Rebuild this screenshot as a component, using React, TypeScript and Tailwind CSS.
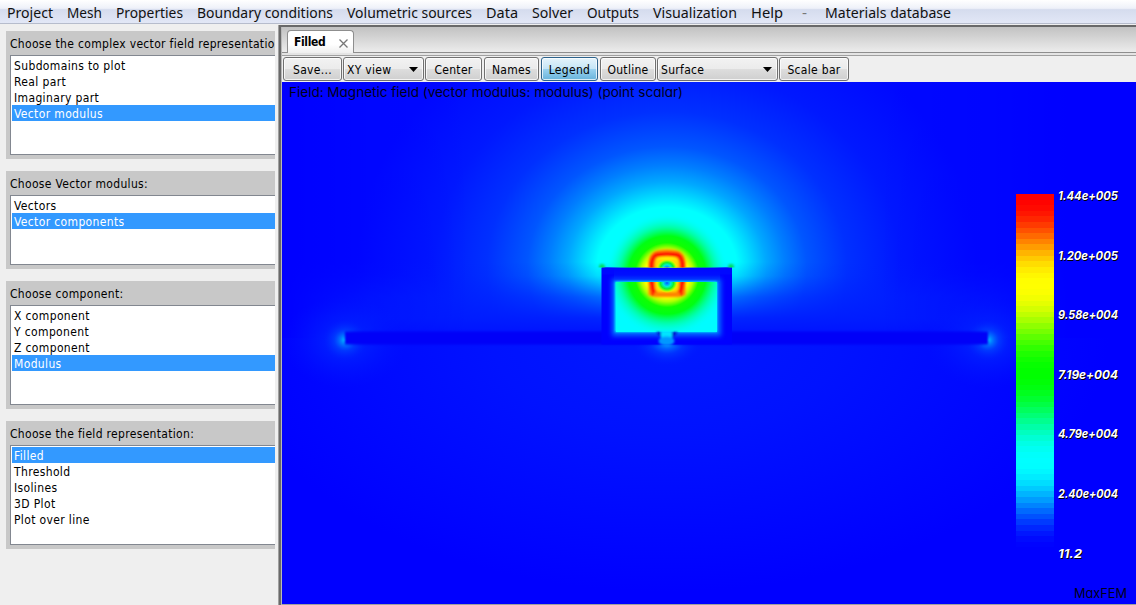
import React from "react";

const MENU = [
  { label: "Project", box: "w-[60px]", len: 46 },
  { label: "Mesh", box: "w-[49px]", len: 35 },
  { label: "Properties", box: "w-[81px]", len: 67 },
  { label: "Boundary conditions", box: "w-[150px]", len: 136 },
  { label: "Volumetric sources", box: "w-[139px]", len: 125 },
  { label: "Data", box: "w-[46px]", len: 32 },
  { label: "Solver", box: "w-[55px]", len: 41 },
  { label: "Outputs", box: "w-[66px]", len: 52 },
  { label: "Visualization", box: "w-[98px]", len: 84 },
  { label: "Help", box: "w-[51px]", len: 32 },
  { label: "-", box: "w-[23px]", len: 5 },
  { label: "Materials database", box: "w-[140px]", len: 126 },
];

const GROUPS = [
  {
    title: "Choose the complex vector field representation:",
    size: "h-[100px]",
    items: ["Subdomains to plot", "Real part", "Imaginary part", "Vector modulus"],
    selected: 3,
  },
  { title: "Choose Vector modulus:", size: "h-[70px]", items: ["Vectors", "Vector components"], selected: 1 },
  {
    title: "Choose component:",
    size: "h-[100px]",
    items: ["X component", "Y component", "Z component", "Modulus"],
    selected: 3,
  },
  {
    title: "Choose the field representation:",
    size: "h-[100px]",
    items: ["Filled", "Threshold", "Isolines", "3D Plot", "Plot over line"],
    selected: 0,
  },
];

const TOOLS = [
  { label: "Save...", box: "w-[59px] mr-px" },
  { label: "XY view", box: "w-[81px] mr-px", combo: true },
  { label: "Center", box: "w-[57px] mr-[2px]" },
  { label: "Names", box: "w-[55px] mr-[2px]" },
  { label: "Legend", box: "w-[57px] mr-[2px]", active: true },
  { label: "Outline", box: "w-[56px] mr-px" },
  { label: "Surface", box: "w-[121px] mr-px", combo: true },
  { label: "Scale bar", box: "w-[70px]" },
];

const TAHOMA = "font-['DejaVu_Sans_Condensed','DejaVu_Sans',sans-serif] [font-stretch:condensed]";
const LEGEND_LABELS = ["1.44e+005", "1.20e+005", "9.58e+004", "7.19e+004", "4.79e+004", "2.40e+004", "11.2"];
const BANDS = 64;

function rampColor(t: number) {
  const seg = Math.min(3, Math.floor(t * 4));
  const f = 0.5 * (1 - Math.cos(Math.PI * (t * 4 - seg)));
  const up = Math.round(255 * f);
  const down = 255 - up;
  return [`rgb(0,${up},255)`, `rgb(0,255,${down})`, `rgb(${up},255,0)`, `rgb(255,${down},0)`][seg];
}

function MenuBar() {
  return (
    <nav className="flex h-6 shrink-0 items-start border-b border-[#b6bccc] bg-[linear-gradient(#ffffff_0%,#eef1f9_36%,#d5dcee_42%,#e2e7f6_100%)] pl-[7px] font-['Noto_Sans',sans-serif] text-[14px] leading-[25px] text-black">
      {MENU.map((m) => (
        <div key={m.label} className={`${m.box} shrink-0 whitespace-nowrap`}>
          <svg width={m.len + 2} height="23" className="block overflow-visible">
            <text x="0" y="18" textLength={m.len} lengthAdjust="spacingAndGlyphs" fill={m.label === "-" ? "#777" : "#111"}>
              {m.label}
            </text>
          </svg>
        </div>
      ))}
    </nav>
  );
}

function Sidebar() {
  return (
    <aside className="flex w-[275px] shrink-0 flex-col gap-3 overflow-hidden pt-[7px] pl-[6px]">
      {GROUPS.map((g) => (
        <section key={g.title} className="w-[320px] bg-[#c8c8c8] pb-1 pl-1">
          <h2 className="h-6 text-[12px] leading-[27px] tracking-[0.32px] whitespace-nowrap">{g.title}</h2>
          <ul className={`${g.size} border border-[#828790] bg-white p-px`}>
            {g.items.map((it, i) => (
              <li
                key={it}
                className={`h-4 pl-[2px] text-[12px] leading-[19px] tracking-[0.36px] ${i === g.selected ? "bg-[#3399ff] text-white" : "text-black"}`}
              >
                {it}
              </li>
            ))}
          </ul>
        </section>
      ))}
    </aside>
  );
}

function Toolbar() {
  return (
    <div className="flex h-[26px] shrink-0 items-start bg-[#efefef] pt-px pl-px">
      {TOOLS.map((t) => (
        <button
          key={t.label}
          className={`${t.box} flex h-6 shrink-0 items-center rounded-[3px] border text-[12px] tracking-[0.3px] whitespace-nowrap text-black shadow-[inset_0_0_0_1px_rgba(255,255,255,0.75)] ${
            t.combo ? "justify-between pr-[5px] pl-[3px]" : "justify-center"
          } ${
            t.active
              ? "border-[#2c628b] bg-[linear-gradient(#e5f4fc_0%,#c4e5f6_50%,#98d1ef_52%,#68b3db_100%)]"
              : "border-[#707070] bg-[linear-gradient(#f2f2f2_0%,#ebebeb_50%,#dddddd_52%,#cfcfcf_100%)]"
          }`}
        >
          <span className="pt-[2px]">{t.label}</span>
          {t.combo && (
            <svg width="9" height="5" viewBox="0 0 9 5">
              <path d="M0 0H9L4.5 5Z" fill="#000" />
            </svg>
          )}
        </button>
      ))}
    </div>
  );
}

function FieldPlot() {
  return (
    <svg viewBox="282 82 854 522" width="854" height="522" className="block shrink-0">
      <defs>
        <radialGradient id="halo" gradientUnits="userSpaceOnUse" cx="0" cy="0" r="270" gradientTransform="translate(667 268) scale(1.15 1)">
          <stop offset="0" stopColor="#00ffff" />
          <stop offset="0.225" stopColor="#00ffff" />
          <stop offset="0.26" stopColor="#00e0ff" />
          <stop offset="0.32" stopColor="#00a8ff" />
          <stop offset="0.38" stopColor="#007eff" />
          <stop offset="0.45" stopColor="#0056ff" />
          <stop offset="0.58" stopColor="#0030ff" />
          <stop offset="0.75" stopColor="#0018ff" />
          <stop offset="1" stopColor="#0008ff" />
        </radialGradient>
        <linearGradient id="fall" x1="0" y1="262" x2="0" y2="332" gradientUnits="userSpaceOnUse">
          <stop offset="0" stopColor="#0020ff" stopOpacity="0" />
          <stop offset="0.2" stopColor="#0020ff" stopOpacity="0.15" />
          <stop offset="0.5" stopColor="#0020ff" stopOpacity="0.65" />
          <stop offset="0.8" stopColor="#001cff" stopOpacity="0.95" />
          <stop offset="1" stopColor="#0014ff" stopOpacity="1" />
        </linearGradient>
        <linearGradient id="sides" x1="282" y1="0" x2="1136" y2="0" gradientUnits="userSpaceOnUse">
          <stop offset="0" stopColor="#0000ff" />
          <stop offset="0.1" stopColor="#0000ff" stopOpacity="0.3" />
          <stop offset="0.22" stopColor="#0000ff" stopOpacity="0" />
          <stop offset="0.7" stopColor="#0000ff" stopOpacity="0" />
          <stop offset="0.83" stopColor="#0000ff" stopOpacity="0.4" />
          <stop offset="0.92" stopColor="#0000ff" />
        </linearGradient>
        <radialGradient id="below" gradientUnits="userSpaceOnUse" cx="0" cy="0" r="260" gradientTransform="translate(667 332) scale(1.7 1)">
          <stop offset="0" stopColor="#001aff" />
          <stop offset="0.4" stopColor="#0012ff" />
          <stop offset="1" stopColor="#0000ff" />
        </radialGradient>
        <radialGradient id="core" gradientUnits="userSpaceOnUse" cx="667" cy="275" r="62">
          <stop offset="0" stopColor="#ffff00" />
          <stop offset="0.36" stopColor="#ffff00" />
          <stop offset="0.43" stopColor="#b0ff00" />
          <stop offset="0.52" stopColor="#10ff00" />
          <stop offset="0.63" stopColor="#00ff14" />
          <stop offset="0.77" stopColor="#00ff90" stopOpacity="0.8" />
          <stop offset="1" stopColor="#00ffff" stopOpacity="0" />
        </radialGradient>
        <radialGradient id="eye">
          <stop offset="0" stopColor="#0058ff" />
          <stop offset="0.15" stopColor="#0098ff" />
          <stop offset="0.35" stopColor="#00eed0" />
          <stop offset="0.6" stopColor="#10f030" />
          <stop offset="0.8" stopColor="#a0ff00" />
          <stop offset="1" stopColor="#ffff00" stopOpacity="0" />
        </radialGradient>
        <radialGradient id="tip">
          <stop offset="0" stopColor="#00c8ff" />
          <stop offset="0.2" stopColor="#0090ff" stopOpacity="0.8" />
          <stop offset="0.5" stopColor="#0058ff" stopOpacity="0.4" />
          <stop offset="1" stopColor="#0020ff" stopOpacity="0" />
        </radialGradient>
        <radialGradient id="wide">
          <stop offset="0" stopColor="#003cff" stopOpacity="0.7" />
          <stop offset="1" stopColor="#0018ff" stopOpacity="0" />
        </radialGradient>
        <linearGradient id="beam" x1="0" y1="268" x2="0" y2="282" gradientUnits="userSpaceOnUse">
          <stop offset="0" stopColor="#0008ff" />
          <stop offset="0.5" stopColor="#0010ff" />
          <stop offset="0.8" stopColor="#0034ff" />
          <stop offset="1" stopColor="#0058ff" />
        </linearGradient>
        <filter id="soft" x="-40%" y="-40%" width="180%" height="180%">
          <feGaussianBlur stdDeviation="0.8" />
        </filter>
        <filter id="spread" x="-20%" y="-20%" width="140%" height="140%">
          <feGaussianBlur stdDeviation="2.6" />
        </filter>
        <clipPath id="window">
          <path d="M282 82H1136V267.500H282ZM615.500 282H717V332H615.500Z" />
        </clipPath>
        <clipPath id="wall">
          <path d="M602 268H731V345H602Z" />
        </clipPath>
      </defs>

      <rect x="282" y="82" width="854" height="522" fill="url(#halo)" />
      <rect x="282" y="262" width="854" height="82" fill="url(#fall)" />
      <rect x="282" y="82" width="854" height="262" fill="url(#sides)" />
      <rect x="282" y="338" width="854" height="266" fill="url(#below)" />
      <ellipse cx="345" cy="342" rx="62" ry="46" fill="url(#wide)" />
      <ellipse cx="988" cy="342" rx="62" ry="46" fill="url(#wide)" />
      <ellipse cx="345" cy="340" rx="22" ry="21" fill="url(#tip)" />
      <ellipse cx="988" cy="340" rx="22" ry="21" fill="url(#tip)" />
      <ellipse cx="667" cy="342" rx="34" ry="24" fill="url(#tip)" />

      <rect x="345" y="331.500" width="643" height="13" fill="#0000f8" filter="url(#soft)" />
      <rect x="601.500" y="267.500" width="130.500" height="77" fill="#0000ff" />
      <g clipPath="url(#wall)">
        <rect x="612" y="279" width="109" height="57" fill="#0070ff" filter="url(#spread)" />
      </g>
      <rect x="602" y="267.500" width="130" height="7" fill="#0008ff" />
      <rect x="614" y="268" width="106" height="14" fill="url(#beam)" />
      <rect x="615" y="281.500" width="102" height="50.500" fill="#00ffff" filter="url(#soft)" />

      <g clipPath="url(#window)">
        <rect x="616" y="282" width="101" height="50" fill="#00fcff" />
        <circle cx="667" cy="275" r="62" fill="url(#core)" />
        <path d="M603 266H636M698 266H731" stroke="#00ff60" strokeWidth="3" filter="url(#spread)" />
        <circle cx="602" cy="267" r="3" fill="#00e060" filter="url(#soft)" />
        <circle cx="731" cy="267" r="3" fill="#00e060" filter="url(#soft)" />
        <g filter="url(#soft)">
          <path d="M652 292V262Q653 255 658 254Q667 252 676 254Q681 255 682 262V292Z" fill="#ffff00" stroke="#ff8800" strokeWidth="7" />
          <path d="M654 296L651.500 281V265Q652 257 656 255Q667 253 678 255Q682 257 682.500 265V281L680 296" fill="none" stroke="#ff1400" strokeWidth="4.500" />
          <path d="M654 295H680" stroke="#ff8400" strokeWidth="4" />
          <rect x="656" y="259" width="22" height="33" rx="4" fill="#ffd800" />
        </g>
        <ellipse cx="667" cy="268" rx="10.500" ry="9" fill="url(#eye)" />
        <ellipse cx="667" cy="283" rx="11" ry="10" fill="url(#eye)" />
      </g>

      <g filter="url(#soft)">
        <path d="M656 332H662V338ZM672 332H678L672 338Z" fill="#0010c8" />
        <rect x="661" y="331" width="11" height="8" fill="#00e4ff" />
        <ellipse cx="666.500" cy="341" rx="8" ry="4.500" fill="#0098ff" />
      </g>

      {Array.from({ length: BANDS }, (_, i) => (
        <rect
          key={i}
          x="1016"
          y={194 + (i * 359) / BANDS}
          width="38"
          height={359 / BANDS}
          fill={rampColor(Math.min(0.9999, 1 - i / (BANDS - 1)))}
          shapeRendering="crispEdges"
        />
      ))}

      <g fontFamily="Inter, sans-serif" className="[font-feature-settings:'cv11']">
        <text x="289" y="97" fontSize="13" fill="#000018" textLength="394" lengthAdjust="spacingAndGlyphs">
          Field: Magnetic field (vector modulus: modulus) (point scalar)
        </text>
        <text x="1074" y="598" fontSize="13" fill="#000018" textLength="53" lengthAdjust="spacingAndGlyphs">
          MaxFEM
        </text>
        <g fontSize="12" fontWeight="700" fontStyle="italic" fill="#fff" className="[text-shadow:1px_1px_0_#000]">
          {LEGEND_LABELS.map((l, i) => (
            <text
              key={l}
              x="1058"
              y={200 + i * 59.6}
              textLength={l.length > 5 ? 60 : 24}
              lengthAdjust="spacingAndGlyphs"
            >
              {l}
            </text>
          ))}
        </g>
      </g>
    </svg>
  );
}

export default function App() {
  return (
    <div className={`flex h-[605px] w-[1136px] flex-col overflow-hidden bg-[#efefef] text-black ${TAHOMA}`}>
      <MenuBar />
      <div className="flex min-h-0 flex-1">
        <Sidebar />
        <main className="ml-1 flex min-w-0 flex-1 flex-col pt-px">
          <div className="flex min-h-0 flex-1 flex-col border-t-2 border-l-2 border-t-[#696969] border-l-[#696969] shadow-[-1px_0_0_#a0a0a0] outline-none">
            <div className="flex min-h-0 flex-1 flex-col border-l border-[#b8b8b8]">
              <div className="flex h-[26px] shrink-0 items-end border-b border-[#8e8e8e] bg-[linear-gradient(#c2c2c2,#ececec)] pl-[5px]">
                <div className="-mb-px flex h-[23px] w-[67px] items-center justify-between rounded-t-[4px] border border-b-0 border-[#8e8e8e] bg-[linear-gradient(#ffffff_60%,#efefef)] pr-[5px] pl-[6px]">
                  <span className="text-[12px] font-bold tracking-[-0.35px]">Filled</span>
                  <svg width="9" height="9" viewBox="0 0 9 9" className="mt-[2px]">
                    <path d="M.5 .5L8.500 8.500M8.500 .5L.5 8.500" stroke="#777" strokeWidth="1.300" />
                  </svg>
                </div>
              </div>
              <div className="h-[3px] shrink-0 border-b border-[#a0a0a0] bg-[#e4e4e4]" />
              <div className="flex shrink-0 flex-col">
                <Toolbar />
                <FieldPlot />
                <div className="h-px bg-[#a0a0a0]" />
              </div>
            </div>
          </div>
        </main>
      </div>
    </div>
  );
}
